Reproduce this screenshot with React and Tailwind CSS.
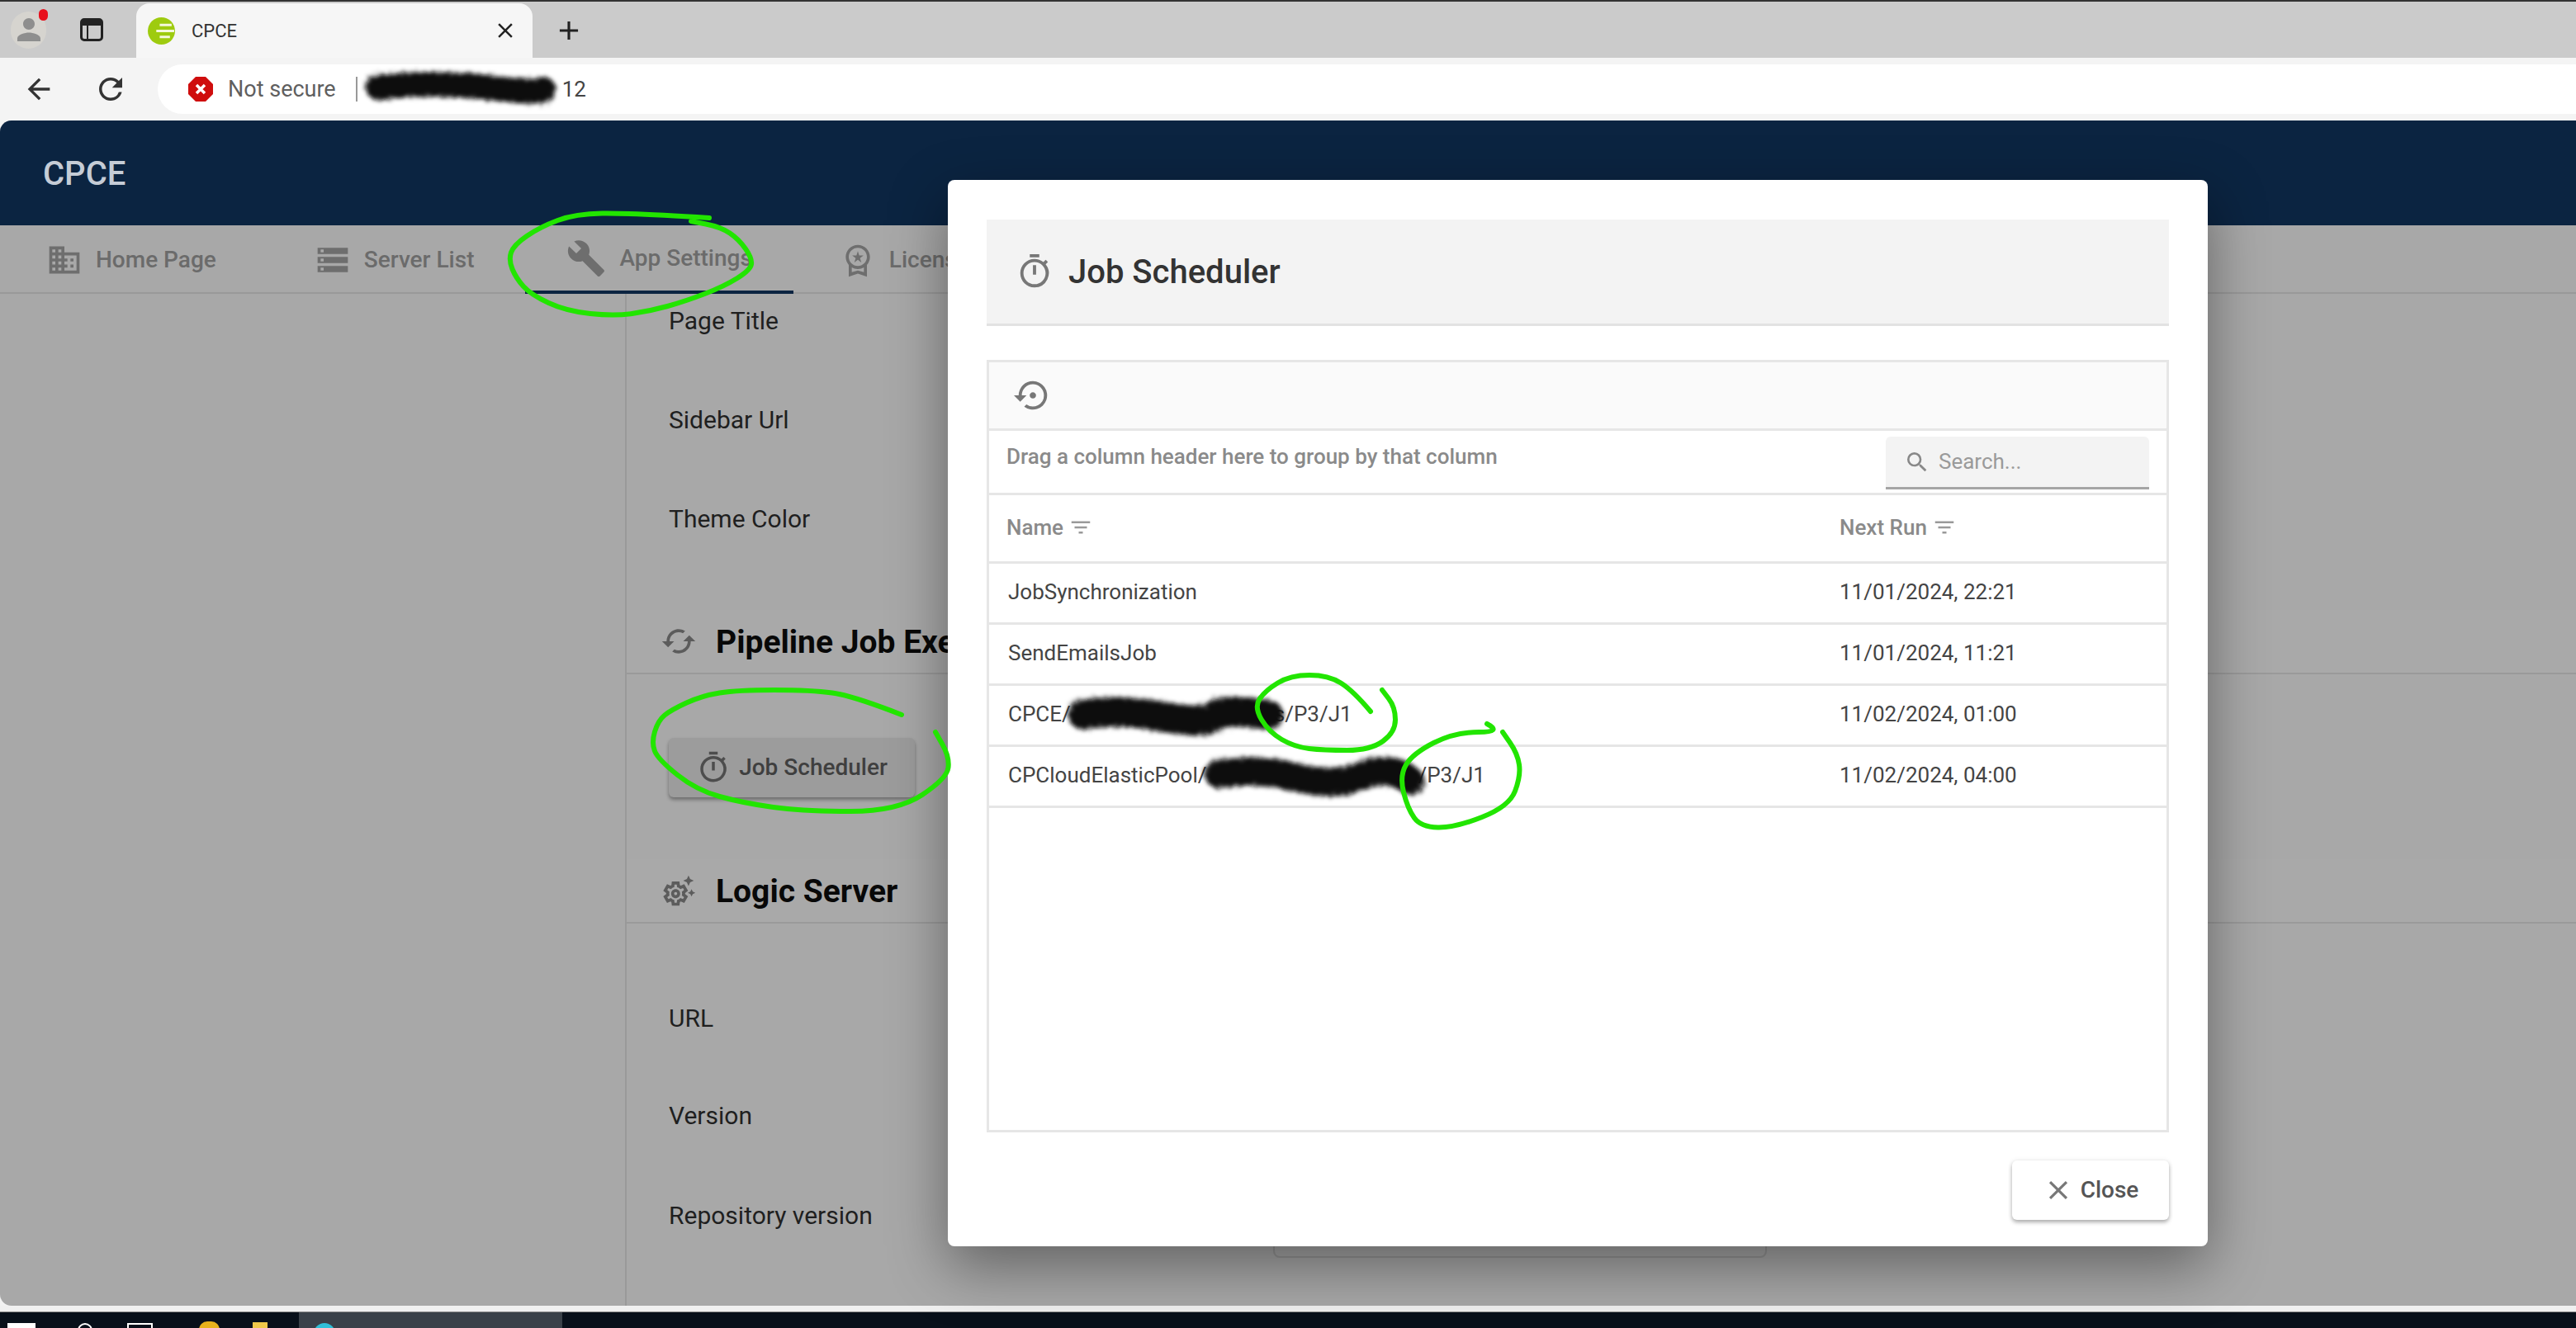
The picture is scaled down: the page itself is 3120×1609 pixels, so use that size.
import {
  MdDomain,
  MdStorage,
  MdBuild,
  MdOutlineWorkspacePremium,
  MdCached,
  MdOutlineSettingsSuggest,
  MdOutlineTimer,
  MdSettingsBackupRestore,
  MdSearch,
  MdFilterList,
  MdClose,
  MdArrowBack,
  MdRefresh,
  MdAdd,
  MdPerson,
} from 'react-icons/md';

// hand drawn marks, in page coordinates
const marks = [
  [[859,264],[762,258],[697,259],[654,275],[622,297],[616,315],[625,337],[643,357],[686,377],[744,383],[787,377],[830,365],[877,347],[909,327],[911,313],[895,290],[873,275],[837,268]],
  [[1092,866],[1033,843],[983,836],[893,836],[850,843],[813,860],[797,873],[789,900],[797,920],[843,957],[900,973],[973,983],[1087,983],[1147,943],[1150,917],[1133,887]],
  [[1660,862],[1639,837],[1609,818],[1563,818],[1532,837],[1519,857],[1537,887],[1568,905],[1603,909],[1660,909],[1690,887],[1690,857],[1674,836]],
  [[1801,877],[1820,887],[1762,887],[1711,913],[1695,940],[1705,980],[1721,1002],[1762,1003],[1828,977],[1842,940],[1838,913],[1820,887]],
];

function smoothPath(pts) {
  let d = `M${pts[0][0]} ${pts[0][1]}`;
  for (let i = 1; i < pts.length - 1; i++) {
    const mx = (pts[i][0] + pts[i + 1][0]) / 2;
    const my = (pts[i][1] + pts[i + 1][1]) / 2;
    d += ` Q${pts[i][0]} ${pts[i][1]} ${mx} ${my}`;
  }
  const last = pts[pts.length - 1];
  return `${d} L${last[0]} ${last[1]}`;
}

const tabs = [
  { label: 'Home Page', Icon: MdDomain, ml: 'ml-[6px]', size: 'w-[44px] h-[44px]' },
  { label: 'Server List', Icon: MdStorage, ml: 'ml-[19px]', size: 'w-[44px] h-[44px]' },
  { label: 'App Settings', Icon: MdBuild, ml: 'ml-[12px]', size: 'w-[48px] h-[48px]', active: true },
  { label: 'License', Icon: MdOutlineWorkspacePremium, ml: 'ml-[6px]', size: 'w-[44px] h-[44px]' },
];

function ChromeBar() {
  return (
    <>
      <div className="h-[2px] bg-[#333]" />
      <div className="h-[68px] bg-[#cbcbcb] flex items-end relative">
        <div className="w-[165px] h-full flex items-center">
          <div className="ml-[13px] w-[43px] h-[45px] rounded-full bg-[#d6d4cf] flex items-center justify-center relative overflow-visible">
            <MdPerson className="w-[42px] h-[46px] text-[#8e8e8e]" />
            <span className="absolute right-[-2px] top-[-3px] w-[11px] h-[14px] rounded-full bg-[#e8101c]" />
          </div>
          <div className="ml-[41px] w-[28px] h-[28px] border-[3px] border-[#222] rounded-[5px] relative">
            <span className="absolute left-0 right-0 top-0 h-[6px] bg-[#222]" />
            <span className="absolute left-[5px] top-0 bottom-0 w-[2px] bg-[#222]" />
          </div>
        </div>
        <div className="w-[480px] h-[66px] bg-[#f6f6f6] rounded-t-[16px] flex items-center">
          <svg viewBox="0 0 32 32" className="ml-[14px] w-[33px] h-[33px]">
            <circle cx="16" cy="16" r="16" fill="#9ecb0f" />
            <path d="M14 9h14M10 16h21M14 23h12" stroke="#f4f8dc" strokeWidth="3" fill="none" />
          </svg>
          <span className="ml-[20px] text-[22px] text-[#333]">CPCE</span>
          <MdClose className="ml-[310px] w-[30px] h-[30px] text-[#222]" />
        </div>
        <MdAdd className="ml-[25px] mb-[14px] w-[38px] h-[38px] text-[#222]" />
      </div>
      <div className="h-[76px] bg-[#f4f4f4] flex items-center">
        <MdArrowBack className="ml-[27px] w-[40px] h-[40px] text-[#333]" />
        <MdRefresh className="ml-[46px] w-[42px] h-[42px] text-[#333]" />
        <div className="ml-[36px] flex-1 h-[60px] bg-white rounded-l-[30px] flex items-center">
          <svg viewBox="0 0 30 30" className="ml-[37px] w-[30px] h-[32px]">
            <path d="M9 0h12l9 9v12l-9 9H9l-9-9V9z" fill="#cf0d0d" />
            <path d="M10 10l10 10M20 10L10 20" stroke="#fff" strokeWidth="3.5" />
          </svg>
          <span className="ml-[18px] text-[27px] text-[#5f5f5f]">Not secure</span>
          <span className="ml-[24px] w-[2px] h-[30px] bg-[#999]" />
          <span className="ml-[248px] text-[26px] text-[#444]">12</span>
        </div>
      </div>
    </>
  );
}

function FormRow({ label, className, inputClass }) {
  return (
    <div className={`flex items-center ${className}`}>
      <span className="w-[732px] text-[30px] text-[#1f1f1f]">{label}</span>
      <div className={`w-[598px] h-[80px] border-2 border-[#8a8a8a]/60 rounded-[8px] self-end ${inputClass || ''}`} />
    </div>
  );
}

function SectionTitle({ Icon, title, className }) {
  return (
    <div className={`h-[78px] pl-[41px] flex items-center border-b-2 border-[#9a9a9a] bg-[#a9a9a9] ${className}`}>
      <Icon className="w-[44px] h-[44px] text-[#5c5c5c]" />
      <span className="ml-[23px] mt-[2px] text-[39px] font-bold text-[#080808] whitespace-nowrap">{title}</span>
    </div>
  );
}

function Page() {
  return (
    <div className="h-[1436px] bg-[#a8a8a8] rounded-tl-[14px] rounded-bl-[14px] overflow-hidden flex flex-col">
      <div className="h-[127px] shrink-0 bg-[#0b2441] flex items-center pl-[52px]">
        <span className="mt-[2px] text-[40px] font-medium text-[#c5ccd6]">CPCE</span>
      </div>
      <div className="h-[83px] shrink-0 flex border-b-2 border-[#999]">
        {tabs.map(({ label, Icon, ml, size, active }) => (
          <div
            key={label}
            className={`${ml} px-[50px] h-[83px] flex items-center ${active ? 'border-b-4 border-[#0b2441]' : ''}`}
          >
            <Icon className={`${size} text-[#6e6e6e]`} />
            <span className="ml-[16px] text-[28px] font-medium text-[#6b6b6b] whitespace-nowrap">{label}</span>
          </div>
        ))}
      </div>
      <div className="flex-1 flex min-h-0">
        <div className="w-[759px] border-r-2 border-[#999]" />
        <div className="flex-1 flex flex-col">
          <div className="-mt-[28px] pl-[51px]">
            <FormRow label="Page Title" className="h-[120px]" />
            <FormRow label="Sidebar Url" className="h-[120px]" />
            <FormRow label="Theme Color" className="h-[120px]" />
          </div>
          <SectionTitle Icon={MdCached} title="Pipeline Job Executions" className="mt-[51px]" />
          <div className="mt-[77px] ml-[51px] w-[298px] h-[72px] bg-[#9c9c9c] rounded-[6px] shadow-[0_3px_4px_rgba(0,0,0,0.35)] flex items-center justify-center">
            <MdOutlineTimer className="w-[42px] h-[42px] text-[#4d4d4d]" />
            <span className="ml-[10px] text-[28px] font-medium text-[#3f3f3f]">Job Scheduler</span>
          </div>
          <SectionTitle Icon={MdOutlineSettingsSuggest} title="Logic Server" className="mt-[75px]" />
          <div className="mt-[54px] pl-[51px]">
            <FormRow label="URL" className="h-[120px]" />
            <FormRow label="Version" className="h-[116px]" />
            <FormRow label="Repository version" className="h-[126px]" inputClass="mb-[11px]" />
          </div>
        </div>
      </div>
    </div>
  );
}

function GridRow({ name, next }) {
  return (
    <div className="h-[74px] flex items-center border-b-[3px] border-[#e6e6e6] pl-[23px] pb-[3px] text-[26px] text-[#444]">
      <div className="w-[1007px] whitespace-nowrap">{name}</div>
      <div>{next}</div>
    </div>
  );
}

function JobSchedulerModal() {
  return (
    <div className="absolute left-[1148px] top-[218px] w-[1526px] h-[1292px] bg-white rounded-[8px] shadow-[0_24px_70px_rgba(0,0,0,0.42)] px-[47px] pt-[48px] flex flex-col">
      <div className="h-[129px] shrink-0 bg-[#f3f3f3] border-b-[3px] border-[#e2e2e2] flex items-center pl-[35px]">
        <MdOutlineTimer className="w-[46px] h-[46px] text-[#777]" />
        <span className="ml-[18px] mt-[2px] text-[40px] font-medium text-[#333]">Job Scheduler</span>
      </div>
      <div className="mt-[41px] h-[936px] shrink-0 border-[3px] border-[#e6e6e6] flex flex-col">
        <div className="h-[83px] shrink-0 bg-[#fafafa] border-b-[3px] border-[#e6e6e6] flex items-center pl-[30px]">
          <MdSettingsBackupRestore className="w-[46px] h-[46px] text-[#777]" />
        </div>
        <div className="h-[78px] shrink-0 border-b-[3px] border-[#e6e6e6] flex items-start pl-[21px] pr-[21px]">
          <span className="mt-[12px] text-[26px] font-medium text-[#8a8a8a] whitespace-nowrap">Drag a column header here to group by that column</span>
          <div className="ml-auto mt-[7px] w-[319px] h-[64px] bg-[#f3f3f3] border-b-[3px] border-[#a5a5a5] rounded-t-[6px] flex items-center pl-[22px]">
            <MdSearch className="w-[32px] h-[32px] text-[#888]" />
            <span className="ml-[10px] text-[26px] text-[#9a9a9a]">Search...</span>
          </div>
        </div>
        <div className="h-[83px] shrink-0 border-b-[3px] border-[#e6e6e6] flex items-center pl-[21px] pb-[2px] text-[26px] font-medium text-[#8a8a8a]">
          <div className="w-[1009px] flex items-center">
            Name
            <MdFilterList className="ml-[6px] w-[30px] h-[30px] text-[#999]" />
          </div>
          <div className="flex items-center">
            Next Run
            <MdFilterList className="ml-[6px] w-[30px] h-[30px] text-[#999]" />
          </div>
        </div>
        <GridRow name="JobSynchronization" next="11/01/2024, 22:21" />
        <GridRow name="SendEmailsJob" next="11/01/2024, 11:21" />
        <GridRow
          name={<>CPCE/<span className="inline-block w-[246px]" />s/P3/J1</>}
          next="11/02/2024, 01:00"
        />
        <GridRow
          name={<>CPCloudElasticPool/<span className="inline-block w-[256px]" />/P3/J1</>}
          next="11/02/2024, 04:00"
        />
      </div>
      <div className="mt-[34px] ml-auto w-[190px] h-[72px] bg-white rounded-[6px] shadow-[0_3px_5px_rgba(0,0,0,0.3),0_0_6px_rgba(0,0,0,0.08)] flex items-center justify-center">
        <MdClose className="w-[38px] h-[38px] text-[#777]" />
        <span className="ml-[8px] text-[28px] font-medium text-[#555]">Close</span>
      </div>
    </div>
  );
}

function Taskbar() {
  return (
    <div className="h-[19px] bg-[#08101a] flex overflow-hidden relative">
      <span className="ml-[9px] mt-[13px] w-[34px] h-[20px] bg-white" />
      <span className="ml-[51px] mt-[13px] w-[18px] h-[18px] rounded-full border-2 border-white" />
      <span className="ml-[42px] mt-[13px] w-[31px] h-[18px] border-2 border-white" />
      <span className="ml-[56px] mt-[11px] w-[25px] h-[20px] rounded-full bg-[#e8b21c]" />
      <span className="ml-[40px] mt-[12px] w-[18px] h-[20px] bg-[#f0c84a]" />
      <div className="ml-[38px] w-[319px] h-full bg-[#3a4149]">
        <span className="block ml-[18px] mt-[13px] w-[26px] h-[26px] rounded-full bg-[#2fc0d8]" />
      </div>
    </div>
  );
}

export default function App() {
  return (
    <div className="relative w-[3120px] h-[1609px] overflow-hidden bg-[#f2f2f2] font-['Roboto',sans-serif]">
      <ChromeBar />
      <Page />
      <div className="h-[7px] bg-[#f0f0f0]" />
      <div className="h-[1px] bg-[#8a8a8a]" />
      <Taskbar />
      <JobSchedulerModal />

      {/* annotations drawn on the screenshot */}
      <svg className="absolute left-0 top-0 pointer-events-none" width="3120" height="1609" viewBox="0 0 3120 1609" fill="none">
        <defs>
          <filter id="smudge" x="-10%" y="-80%" width="120%" height="260%">
            <feTurbulence type="fractalNoise" baseFrequency="0.35" numOctaves="2" seed="4" result="grain" />
            <feDisplacementMap in="SourceGraphic" in2="grain" scale="14" result="rough" />
            <feGaussianBlur in="rough" stdDeviation="2.5" />
          </filter>
        </defs>
        <g filter="url(#smudge)" stroke="#0a0a0a" strokeLinecap="round">
          <path d="M458 106 Q520 98 590 106 T658 108" strokeWidth="30" />
          <path d="M1312 866 Q1350 858 1405 868 T1470 868 T1536 866" strokeWidth="36" />
          <path d="M1476 938 Q1525 930 1570 942 T1650 940 T1708 946" strokeWidth="34" />
        </g>
        <g stroke="#22e500" strokeWidth="6" strokeLinecap="round" strokeLinejoin="round">
          {marks.map((pts, i) => (
            <path key={i} d={smoothPath(pts)} />
          ))}
        </g>
      </svg>
    </div>
  );
}
